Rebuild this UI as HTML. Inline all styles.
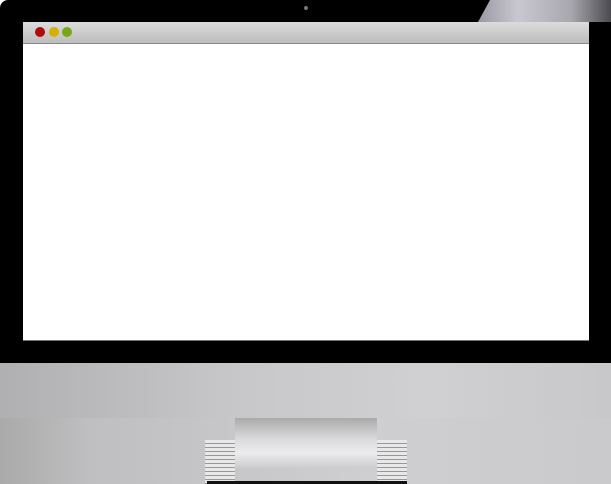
<!DOCTYPE html>
<html><head><style>
html,body{margin:0;padding:0;width:611px;height:484px;overflow:hidden;background:#fff}
.b{position:absolute}
</style></head><body>
<div class="b" style="left:0;top:0;width:611px;height:363px;background:#000;border-radius:8px 8px 0 0"></div>
<div class="b" style="left:478px;top:0;width:133px;height:22px;background:linear-gradient(90deg,#9a98a0,#c9c7d0 30%,#a9a7ae 70%,#4a4a50);clip-path:polygon(12px 0,100% 0,100% 100%,0 100%)"></div>
<div class="b" style="left:304px;top:6px;width:4px;height:4px;border-radius:50%;background:#777"></div>
<div class="b" style="left:23px;top:22px;width:566px;height:21px;background:linear-gradient(#dcdcdc,#bdbdbd);border-bottom:1px solid #888"></div>
<div class="b" style="left:35px;top:27px;width:10px;height:10px;border-radius:50%;background:#b00a0a"></div>
<div class="b" style="left:49px;top:27px;width:10px;height:10px;border-radius:50%;background:#d4b000"></div>
<div class="b" style="left:62px;top:27px;width:10px;height:10px;border-radius:50%;background:#78a818"></div>
<div class="b" style="left:23px;top:44px;width:566px;height:296px;background:#fff;border-bottom:1px solid #777"></div>
<div class="b" style="left:0;top:363px;width:611px;height:121px;background:linear-gradient(90deg,#b0b0b2,#c8c8ca 40%,#d0d0d2 70%,#c8c8ca)"></div>
<div class="b" style="left:0;top:418px;width:611px;height:66px;background:linear-gradient(90deg,#aaa,#bfbfc1 15%,#c4c4c6 30%,#cfcfd1 60%,#cacacc)"></div>
<div class="b" style="left:235px;top:418px;width:142px;height:50px;background:linear-gradient(#aaa,#d8d8da 40%,#ececee 70%,#ccc);clip-path:polygon(0 0,100% 0,100% 100%,0 100%)"></div>
<div class="b" style="left:205px;top:440px;width:30px;height:44px;background:repeating-linear-gradient(#e8e8e8 0 3px,#999 3px 4px)"></div>
<div class="b" style="left:377px;top:440px;width:30px;height:44px;background:repeating-linear-gradient(#e8e8e8 0 3px,#999 3px 4px)"></div>
<div class="b" style="left:207px;top:481px;width:200px;height:3px;background:#111"></div>
</body></html>
